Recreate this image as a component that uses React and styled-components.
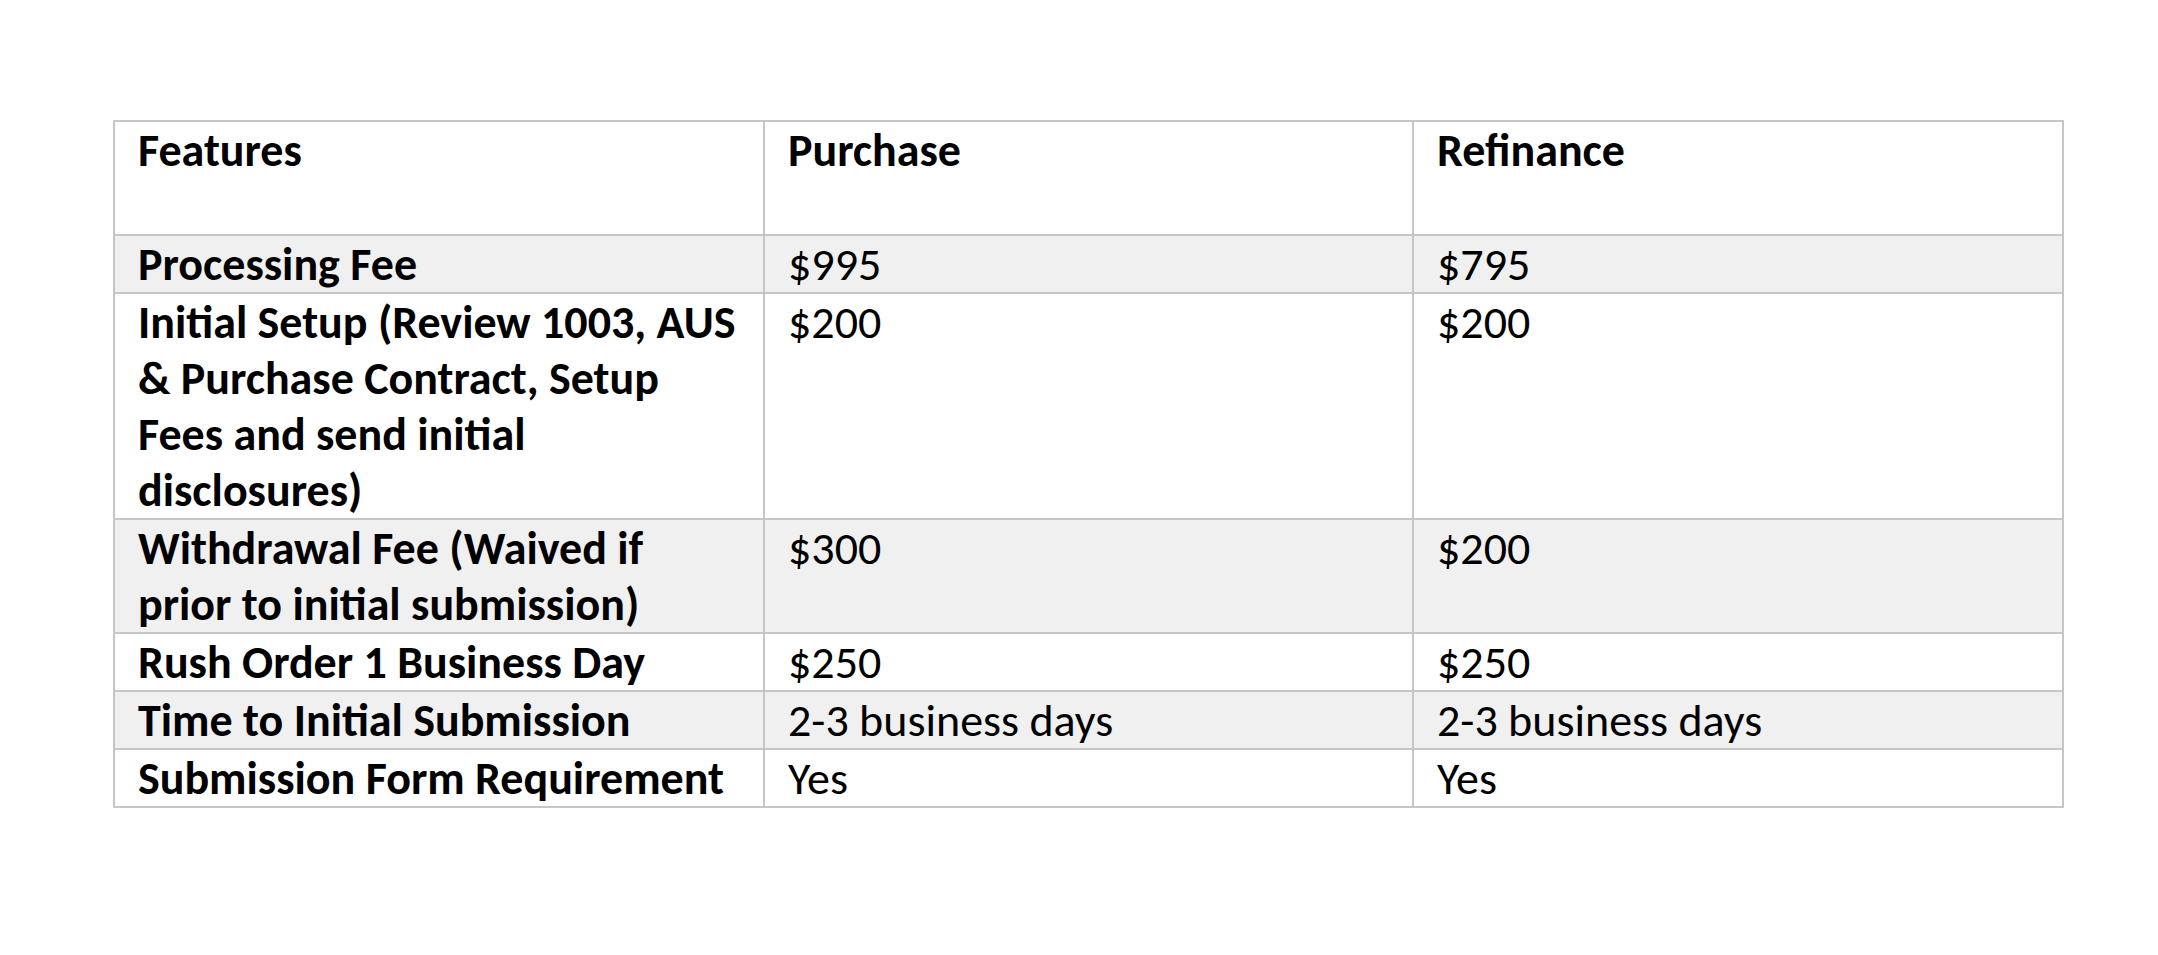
import React from 'react';
import styled, { createGlobalStyle } from 'styled-components';

const GlobalStyle = createGlobalStyle`
    html, body {
        margin: 0;
        padding: 0;
        background: #ffffff;
    }
`;

const rows = [
    { feature: ['Processing Fee'], purchase: '$995', refinance: '$795' },
    {
        feature: ['Initial Setup (Review 1003, AUS', '& Purchase Contract, Setup', 'Fees and send initial', 'disclosures)'],
        purchase: '$200',
        refinance: '$200'
    },
    { feature: ['Withdrawal Fee (Waived if', 'prior to initial submission)'], purchase: '$300', refinance: '$200' },
    { feature: ['Rush Order 1 Business Day'], purchase: '$250', refinance: '$250' },
    { feature: ['Time to Initial Submission'], purchase: '2-3 business days', refinance: '2-3 business days' },
    { feature: ['Submission Form Requirement'], purchase: 'Yes', refinance: 'Yes' }
];

class App extends React.Component {

    render() {
        let list = rows.map((row, i) => (
            <StyledRow key={i} $striped={i % 2 === 0}>
                <StyledCell $bold>
                    {row.feature.map((line, j) => (
                        <StyledLine key={j}>{line}</StyledLine>
                    ))}
                </StyledCell>
                <StyledCell>{row.purchase}</StyledCell>
                <StyledCell>{row.refinance}</StyledCell>
            </StyledRow>
        ));

        return (
            <StyledPage>
                <GlobalStyle />
                <StyledTable>
                    <colgroup>
                        <col style={{ width: 650 }} />
                        <col style={{ width: 649 }} />
                        <col style={{ width: 650 }} />
                    </colgroup>
                    <thead>
                        <StyledRow>
                            <StyledHead>Features</StyledHead>
                            <StyledHead>Purchase</StyledHead>
                            <StyledHead>Refinance</StyledHead>
                        </StyledRow>
                    </thead>
                    <tbody>
                        {list}
                    </tbody>
                </StyledTable>
            </StyledPage>
        );
    }
}

const StyledPage = styled.div`
    padding: 120px 0 0 113px;
    font-family: Carlito, Lato, "Liberation Sans", sans-serif;
    color: #000000;
`;

const StyledTable = styled.table`
    border-collapse: collapse;
    table-layout: fixed;
    width: 1950px;
`;

const StyledRow = styled.tr`
    background: ${props => props.$striped ? '#f0f0f0' : '#ffffff'};
`;

const StyledHead = styled.th`
    border: 2px solid #c6c6c6;
    padding: 0 24px 56px 23px;
    text-align: left;
    vertical-align: top;
    font-size: 46px;
    line-height: 56px;
    font-weight: bold;
`;

const StyledCell = styled.td`
    border: 2px solid #c6c6c6;
    padding: 0 24px 0 23px;
    text-align: left;
    vertical-align: top;
    font-size: 46px;
    line-height: 56px;
    font-weight: ${props => props.$bold ? 'bold' : 'normal'};
    white-space: nowrap;
`;

const StyledLine = styled.div`
`;

export default App;
